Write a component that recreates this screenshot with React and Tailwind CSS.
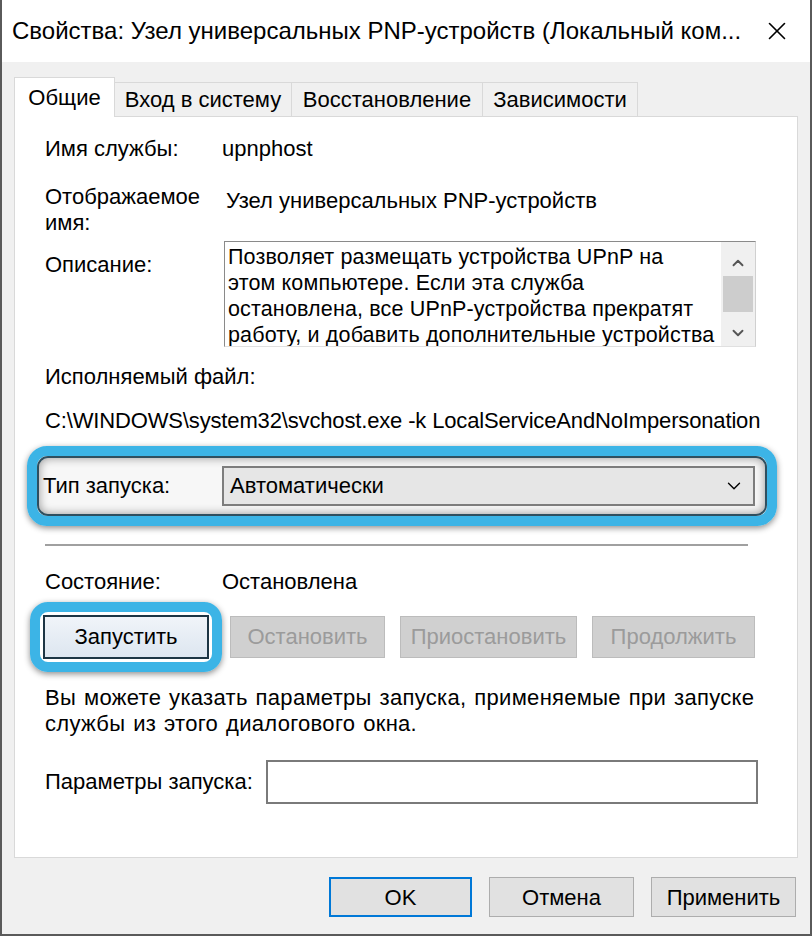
import { ChevronDown, ChevronUp, X } from 'lucide-react';

const font = { fontFamily: '"Liberation Sans", Arial, sans-serif' };

function Tab({ label, active, width }) {
  if (active) {
    return (
      <div className="h-[40px] w-[101px] bg-white border border-b-0 border-[#d9d9d9] flex items-center justify-center text-[22px] text-black relative z-10 -mb-px">
        {label}
      </div>
    );
  }
  return (
    <div className={`h-[34px] ${width} bg-[#f0f0f0] border border-l-0 border-b-0 border-[#d9d9d9] flex items-center justify-center text-[22px] text-black`}>
      {label}
    </div>
  );
}

function DisabledButton({ label, className }) {
  return (
    <div className={`h-[42px] bg-[#d0d0d0] border border-[#bcbcbc] flex items-center justify-center text-[22px] text-[#9b9b9b] ${className}`}>
      {label}
    </div>
  );
}

export default function App() {
  return (
    <div style={font} className="w-[812px] h-[936px] bg-[#f0f0f0] border-x-2 border-b-2 border-[#5a5a5a] flex flex-col overflow-hidden text-black">
      {/* title bar */}
      <div className="h-[62px] bg-white flex items-center justify-between pl-[10px] pr-[18px] shrink-0">
        <span className="text-[24px] whitespace-nowrap">Свойства: Узел универсальных PNP-устройств (Локальный ком...</span>
        <X size={30} strokeWidth={1.3} className="shrink-0" />
      </div>

      <div className="px-[12px] pt-[14px]">
        {/* tabs */}
        <div className="flex items-end h-[40px]">
          <Tab label="Общие" active />
          <Tab label="Вход в систему" width="w-[177px]" />
          <Tab label="Восстановление" width="w-[191px]" />
          <Tab label="Зависимости" width="w-[155px]" />
        </div>

        {/* panel */}
        <div className="w-[784px] h-[742px] bg-white border border-[#d9d9d9] pl-[30px] flex flex-col text-[22px] leading-[26px]">
          <div className="mt-[19px] flex">
            <span className="w-[177px]">Имя службы:</span>
            <span>upnphost</span>
          </div>

          <div className="mt-[22px] flex">
            <span className="w-[181px]">Отображаемое<br />имя:</span>
            <span className="mt-[4px]">Узел универсальных PNP-устройств</span>
          </div>

          <div className="mt-[5px] flex">
            <span className="w-[179px] mt-[11px]">Описание:</span>
            <div className="w-[532px] h-[106px] border border-[#8a8a8a] border-r-[#d0d0d0] border-b-[#e0e0e0] flex">
              <div className="flex-1 pl-[3px] pt-[2px] text-[21.5px] tracking-[0.15px] leading-[26px] whitespace-nowrap overflow-hidden">
                Позволяет размещать устройства UPnP на<br />
                этом компьютере. Если эта служба<br />
                остановлена, все UPnP-устройства прекратят<br />
                работу, и добавить дополнительные устройства
              </div>
              <div className="w-[34px] shrink-0 bg-[#f0f0f0] flex flex-col items-center">
                <ChevronUp size={18} strokeWidth={2.5} className="mt-[12px] text-[#555]" />
                <div className="w-[30px] h-[36px] bg-[#cdcdcd] mt-[4px]" />
                <ChevronDown size={18} strokeWidth={2.5} className="mt-[12px] text-[#555]" />
              </div>
            </div>
          </div>

          <div className="mt-[17px]">Исполняемый файл:</div>
          <div className="mt-[18px] tracking-[-0.15px] whitespace-nowrap">C:\WINDOWS\system32\svchost.exe -k LocalServiceAndNoImpersonation</div>

          {/* highlighted startup type */}
          <div className="mt-[12px] -ml-[18px] w-[750px] h-[80px] rounded-[20px] border-[10px] border-[#3cb4e6] shadow-[0_2px_6px_rgba(0,0,0,0.45)]">
            <div className="h-full rounded-[11px] border-2 border-[#2f4f5f] bg-[#f7f7f7] shadow-[inset_0_0_10px_rgba(0,0,0,0.4)] flex items-center pl-[4px]">
              <span className="w-[179px]">Тип запуска:</span>
              <div className="w-[533px] h-[40px] bg-[#e6e6e6] border-2 border-[#7d7d7d] flex items-center justify-between pl-[6px] pr-[8px]">
                <span>Автоматически</span>
                <ChevronDown size={22} strokeWidth={1.5} />
              </div>
            </div>
          </div>

          <div className="mt-[18px] w-[703px] h-[2px] bg-[#a0a0a0]" />

          <div className="mt-[23px] flex">
            <span className="w-[177px]">Состояние:</span>
            <span>Остановлена</span>
          </div>

          {/* service control buttons */}
          <div className="mt-[7px] -ml-[15px] flex items-center">
            <div className="w-[192px] h-[70px] rounded-[18px] border-[10px] border-[#3cb4e6] shadow-[0_2px_6px_rgba(0,0,0,0.45)] p-[3px]">
              <div className="h-full border-2 border-[#1d3544] bg-[linear-gradient(#f0f4f9,#dde6f0)] flex items-center justify-center">
                Запустить
              </div>
            </div>
            <DisabledButton label="Остановить" className="ml-[8px] w-[155px]" />
            <DisabledButton label="Приостановить" className="ml-[15px] w-[177px]" />
            <DisabledButton label="Продолжить" className="ml-[15px] w-[163px]" />
          </div>

          <div className="mt-[13px] tracking-[0.3px] [word-spacing:1.5px] whitespace-nowrap">
            Вы можете указать параметры запуска, применяемые при запуске<br />службы из этого диалогового окна.
          </div>

          <div className="mt-[23px] flex items-center">
            <span className="w-[221px]">Параметры запуска:</span>
            <div className="w-[492px] h-[44px] border-2 border-[#7a7a7a] bg-white" />
          </div>
        </div>

        {/* footer buttons */}
        <div className="mt-[19px] flex justify-end gap-[17px] pr-[2px] text-[22px]">
          <div className="w-[143px] h-[40px] border-2 border-[#0078d7] bg-[#e1e1e1] flex items-center justify-center">OK</div>
          <div className="w-[145px] h-[40px] border border-[#adadad] bg-[#e1e1e1] flex items-center justify-center">Отмена</div>
          <div className="w-[145px] h-[40px] border border-[#adadad] bg-[#e1e1e1] flex items-center justify-center">Применить</div>
        </div>
      </div>
    </div>
  );
}
